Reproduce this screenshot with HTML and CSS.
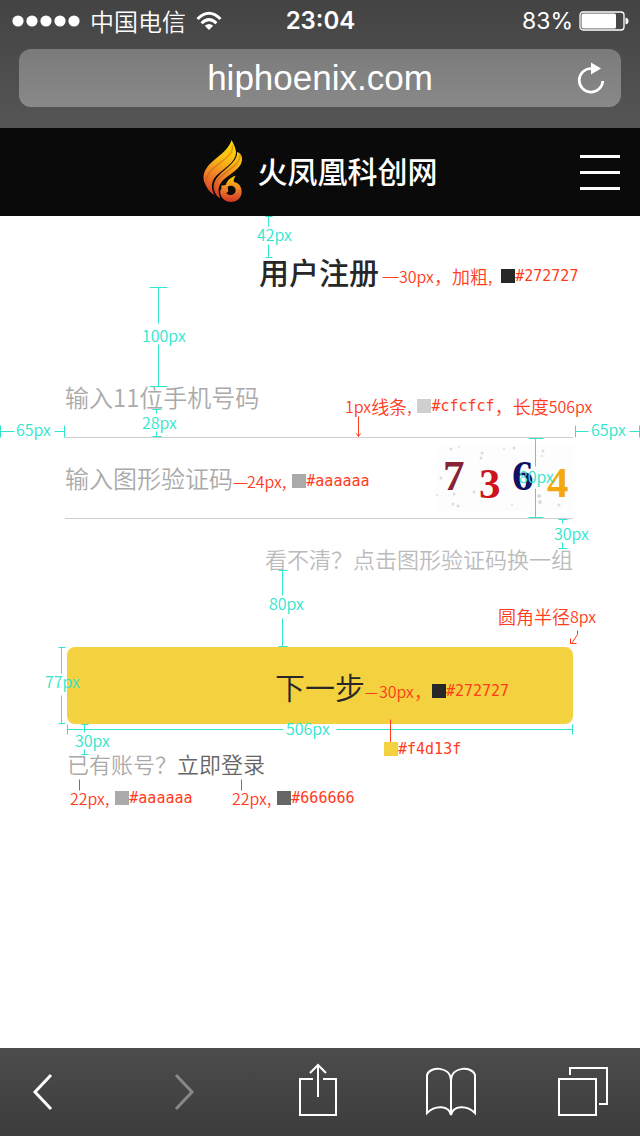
FILE: index.html
```html
<!DOCTYPE html>
<html lang="zh-CN">
<head>
<meta charset="utf-8">
<meta name="viewport" content="width=device-width, initial-scale=1">
<title>用户注册</title>
<link rel="stylesheet" href="styles.css">
</head>
<body>
<div class="page">
  <div class="browser-top">
    <div class="status">
      <div class="status-left">
        <svg class="signal" width="68" height="12" viewBox="0 0 68 12" fill="#fff"><circle cx="6" cy="6" r="5.6"/><circle cx="20" cy="6" r="5.6"/><circle cx="34" cy="6" r="5.6"/><circle cx="48" cy="6" r="5.6"/><circle cx="62" cy="6" r="5.6"/></svg>
        <span class="carrier">中国电信</span>
        <svg class="wifi" width="26" height="20" viewBox="0 0 26 20" fill="none" stroke="#fff" stroke-width="3"><path d="M1.5 8Q13 -3.500 24.500 8"/><path d="M5.600 12.300Q13 5 20.400 12.300"/><path d="M13 19L8.800 14.800Q13 11.300 17.200 14.800Z" fill="#fff" stroke="none"/></svg>
      </div>
      <span class="clock">23:04</span>
      <div class="status-right">
        <span class="percent">83%</span>
        <svg width="50" height="20" viewBox="0 0 50 20"><rect x="1" y="1" width="44" height="18" rx="3" fill="none" stroke="#fff" stroke-width="1.300"/><rect x="2.500" y="2.500" width="34.500" height="15" rx="1.500" fill="#fff"/><path d="M46.500 6.500Q49.500 7 49.500 10T46.500 13.500Z" fill="#fff"/></svg>
      </div>
    </div>
    <div class="address">
      <input class="url" type="text" value="hiphoenix.com" aria-label="网址">
      <button class="reload" type="button" aria-label="刷新"><svg width="28" height="32" viewBox="0 0 28 32"><path d="M14 6.500A11.800 11.800 0 1 0 25.800 19" fill="none" stroke="#fff" stroke-width="2.700"/><path d="M14 0.500V12.500L24 6.500Z" fill="#fff"/></svg></button>
    </div>
  </div>

  <header class="site-head">
    <a class="brand" href="#">
      <svg width="40" height="64" viewBox="36 36 120 192">
        <defs>
          <linearGradient id="flame" x1="120" y1="36" x2="76" y2="210" gradientUnits="userSpaceOnUse"><stop offset="0" stop-color="#ffdc00"/><stop offset=".35" stop-color="#f9bb16"/><stop offset=".65" stop-color="#ef7d28"/><stop offset="1" stop-color="#d63826"/></linearGradient>
          <linearGradient id="curl" x1="120" y1="142" x2="120" y2="222" gradientUnits="userSpaceOnUse"><stop offset="0" stop-color="#ffd400"/><stop offset=".45" stop-color="#f08a26"/><stop offset="1" stop-color="#d33425"/></linearGradient>
        </defs>
        <path fill="url(#flame)" d="M122 36C113 63 91 78 66 99C35 125 33 151 43 169C49 183 59 196 70 200C58 180 61 158 76 143C100 119 142 98 134 66C132 55 127 48 122 36Z"/>
        <path fill="url(#flame)" d="M138 72C141 93 119 111 99 128C73 149 61 169 72 193C75 201 80 207 88 211C76 182 86 164 104 150C127 132 156 116 153 90C152 80 146 74 138 72Z"/>
        <path d="M45 164C44 134 72 116 94 99C116 83 128 70 124 51M72 188C66 157 96 141 117 124C137 108 149 97 147 80" fill="none" stroke="#b84813" stroke-opacity=".35" stroke-width="5"/>
        <path fill="url(#curl)" d="M134 143C119 147 108 158 104 171L90 173L92 180Q86 188 88 198C93 214 105 222 120 222C139 222 152 208 152 191C152 175 142 164 129 162C126 157 130 149 134 143Z"/>
        <path d="M110 176C118 170 133 173 134 186C134 201 116 206 106 196L112 190Z" fill="#0a0a0a"/>
      </svg>
      <span class="brand-name">火凤凰科创网</span>
    </a>
    <button class="menu" type="button" aria-label="菜单"><span></span><span></span><span></span></button>
  </header>

  <main class="content">
    <h1 class="title">用户注册</h1>
    <form class="form">
      <div class="field field-phone"><input type="tel" placeholder="输入11位手机号码" aria-label="手机号码"></div>
      <div class="field field-code">
        <input type="text" placeholder="输入图形验证码" aria-label="图形验证码">
        <svg class="captcha" width="137" height="66" viewBox="0 0 137 66" role="img" aria-label="7364">
          <rect width="137" height="66" fill="#fdfdfd"/>
          <g fill="#dcdcdf"><circle cx="15" cy="4" r="1.500"/><circle cx="23" cy="2" r="1"/><circle cx="46" cy="8" r="1.500"/><circle cx="45" cy="13" r="1.500"/><circle cx="68" cy="4" r="1"/><circle cx="78" cy="3" r="1.500"/><circle cx="107" cy="6" r="1.500"/><circle cx="106" cy="11" r="1"/><circle cx="5" cy="33" r="1.500"/><circle cx="18" cy="49" r="1.500"/><circle cx="17" cy="59" r="1.500"/><circle cx="22" cy="61" r="1.500"/><circle cx="38" cy="47" r="1.500"/><circle cx="103" cy="51" r="2"/><circle cx="104" cy="57" r="2"/><circle cx="123" cy="60" r="1.500"/><circle cx="76" cy="60" r="1"/><circle cx="1" cy="50" r="1"/><circle cx="98" cy="34" r="1"/></g>
          <text x="7" y="45" fill="#872334">7</text><text x="43" y="53" fill="#cd131c">3</text><text x="76" y="45" fill="#101064">6</text><text x="111" y="52" fill="#f3a80d">4</text>
        </svg>
      </div>
      <button class="refresh" type="button">看不清？点击图形验证码换一组</button>
      <div class="actions">
        <button class="submit" type="submit">下一步</button>
        <p class="login">已有账号？<a href="#">立即登录</a></p>
      </div>
    </form>
  </main>

  <nav class="toolbar">
    <button type="button" aria-label="后退"><svg width="22" height="38" viewBox="0 0 22 38"><path d="M19 2L3 19L19 36" fill="none" stroke="#fff" stroke-width="3"/></svg></button>
    <button type="button" aria-label="前进"><svg width="22" height="38" viewBox="0 0 22 38"><path d="M3 2L19 19L3 36" fill="none" stroke="#888" stroke-width="3"/></svg></button>
    <button type="button" aria-label="分享"><svg width="40" height="58" viewBox="0 0 40 58" fill="none" stroke="#fff" stroke-width="2"><path d="M15 16H2V52H38V16H25M20 34V2M12 10L20 2L28 10"/></svg></button>
    <button type="button" aria-label="书签"><svg width="52" height="50" viewBox="0 0 52 50" fill="none" stroke="#fff" stroke-width="2"><path d="M26 48V13C25 -1 5 -1 2 8V46C10 38 24 38 26 48C28 38 42 38 50 46V8C47 -1 27 -1 26 13"/></svg></button>
    <button type="button" aria-label="标签页"><svg width="50" height="50" viewBox="0 0 50 50" fill="none" stroke="#fff" stroke-width="2"><path d="M1 12H38V48H1ZM12 8V1H49V37H41"/></svg></button>
  </nav>

  <div class="specs">
    <svg class="rules" width="640" height="1136" viewBox="0 0 640 1136" fill="none">
      <g stroke="#2fe6cc" transform="translate(.5 .5)">
        <path d="M265 216H272M268 216V226M268 244V257M265 257H272"/>
        <path d="M149 287H167M158 287V323M158 344V386M149 386H167"/>
        <path d="M152 409H161M156 409V413M156 431V436M152 436H161"/>
        <path d="M0 425V437M0 431H14M54 431H64M64 425V437"/>
        <path d="M575 425V437M575 431H588M629 431H639M639 425V437"/>
        <path d="M528 438H543M535 438V466M535 488V517M528 517H543"/>
        <path d="M558 519H567M562 519V523M562 542V548M558 548H567"/>
        <path d="M278 570H287M282 570V595M282 618V646M278 646H287"/>
        <path d="M58 647H65M61 647V673M61 695V723M58 723H65"/>
        <path d="M81 724H88M84 724V732M84 749V754M81 754H88"/>
        <path d="M67 724V734M67 729H283M336 729H572M572 724V734"/>
      </g>
      <g stroke="#ff3c1c" transform="translate(.5 .5)">
        <path d="M382 277H398M233 483H247M365 693H377M390 719V742M79 779V790M241 779V790"/>
        <path d="M358 416V436M356 433L358 436L360 433"/>
        <path d="M577 630V634L571 643M570 638V643H576"/>
      </g>
    </svg>
    <span class="dim d-top">42px</span>
    <span class="dim d-gap">100px</span>
    <span class="dim d-line">28px</span>
    <span class="dim d-left">65px</span>
    <span class="dim d-right">65px</span>
    <span class="dim d-row">80px</span>
    <span class="dim d-hint">30px</span>
    <span class="dim d-button">80px</span>
    <span class="dim d-height">77px</span>
    <span class="dim d-login">30px</span>
    <span class="dim d-width">506px</span>
    <div class="note n-title">30px<b>，加粗</b>,<i class="chip wide dark"></i><code>#272727</code></div>
    <div class="note n-line">1px<b>线条</b>,<i class="chip line"></i><code>#cfcfcf</code><b>，长度</b>506px</div>
    <div class="note n-field">24px,<i class="chip grey"></i><code>#aaaaaa</code></div>
    <div class="note n-radius"><b>圆角半径</b>8px</div>
    <div class="note n-button">30px<b>，</b><i class="chip dark flush"></i><code>#272727</code></div>
    <div class="note n-fill"><i class="chip yellow flush"></i><code>#f4d13f</code></div>
    <div class="note n-ask">22px,<i class="chip grey"></i><code>#aaaaaa</code></div>
    <div class="note n-login">22px,<i class="chip mid"></i><code>#666666</code></div>
  </div>
</div>
</body>
</html>
```

FILE: styles.css
```css
* { box-sizing: border-box; }
body {
  margin: 0;
  background: #fff;
  font-family: "Noto Sans CJK SC", sans-serif;
  font-weight: 350;
}
button, input {
  margin: 0;
  padding: 0;
  border: 0;
  background: none;
  font: inherit;
  color: inherit;
}
svg { display: block; flex: none; }
.page {
  position: relative;
  display: flex;
  flex-direction: column;
  min-height: 100vh;
}

/* browser chrome */
.browser-top {
  height: 128px;
  background: linear-gradient(#434343, #565656);
  color: #fff;
}
.status {
  display: grid;
  grid-template-columns: 1fr auto 1fr;
  align-items: center;
  height: 41px;
  margin-bottom: 8px;
  padding: 0 11px 0 12px;
  font: 400 24px/40px Inter, sans-serif;
}
.status-left, .status-right { display: flex; align-items: center; }
.status-left { gap: 10px; }
.status-right { justify-content: flex-end; gap: 6px; }
.carrier { font: 350 24px/38px "Noto Sans CJK SC", sans-serif; }
.percent { font-size: 23px; }
.clock { font-weight: 600; }
.address {
  display: flex;
  align-items: center;
  height: 58px;
  margin: 0 19px;
  padding-left: 60px;
  border-radius: 12px;
  background: linear-gradient(#7b7b7b, #898989);
}
.url {
  flex: 1;
  min-width: 0;
  height: 58px;
  text-align: center;
  font: 400 35px/58px "Liberation Sans", sans-serif;
}
.reload { display: flex; justify-content: center; width: 60px; }

/* site header */
.site-head {
  display: grid;
  grid-template-columns: 40px 1fr 40px;
  align-items: center;
  height: 88px;
  padding: 0 20px;
  background: #0a0a0a;
}
.brand {
  grid-column: 2;
  display: flex;
  justify-content: center;
  align-items: center;
  gap: 15px;
  color: #fff;
  text-decoration: none;
}
.brand-name { padding-bottom: 4px; font-size: 30px; line-height: 40px; font-weight: 500; }
.menu { display: grid; gap: 13px; }
.menu span { width: 40px; height: 3px; background: #fff; }

/* registration form */
.content { flex: 1; padding: 34px 67px 0 65px; }
.title {
  margin: 0 0 72px;
  text-align: center;
  font-size: 30px;
  line-height: 42px;
  font-weight: 500;
  color: #272727;
}
.field {
  display: flex;
  align-items: center;
  border-bottom: 1px solid #cfcfcf;
  font-size: 24px;
}
.field input { flex: 1; min-width: 0; height: 40px; line-height: 40px; color: #272727; }
.field input::placeholder { color: #aaa; opacity: 1; }
.field-phone { height: 74px; padding-bottom: 8px; }
.field-code { height: 81px; }
.captcha { font: 700 43px "Liberation Serif", serif; }
.refresh {
  display: block;
  margin: 23px 0 73px auto;
  font-size: 22px;
  line-height: 32px;
  color: #bbb;
}
.actions { padding-left: 2px; }
.submit {
  display: block;
  width: 100%;
  height: 77px;
  border-radius: 8px;
  background: #f4d13f;
  font-size: 30px;
  color: #272727;
}
.login { margin: 23px 0 0; font-size: 22px; line-height: 32px; color: #aaa; }
.login a { color: #666; text-decoration: none; }

/* bottom toolbar */
.toolbar {
  display: grid;
  grid-template-columns: 141fr 125fr 127fr 133fr 50px;
  justify-items: start;
  align-items: center;
  height: 88px;
  padding: 0 32px;
  background: linear-gradient(#4c4c4c, #3c3c3c);
}

/* measurement overlay */
.specs {
  position: absolute;
  inset: 0;
  pointer-events: none;
  font-size: 16px;
  line-height: 18px;
  font-weight: 350;
  white-space: nowrap;
}
.rules { position: absolute; left: 0; top: 0; }
.dim, .note { position: absolute; }
.dim { color: #2fe6cc; }
.d-top { left: 257px; top: 225px; }
.d-gap { left: 142px; top: 326px; }
.d-line { left: 142px; top: 413px; }
.d-left { left: 16px; top: 420px; }
.d-right { left: 591px; top: 420px; }
.d-row { left: 519px; top: 467px; }
.d-hint { left: 554px; top: 524px; }
.d-button { left: 269px; top: 594px; }
.d-height { left: 45px; top: 672px; }
.d-login { left: 75px; top: 731px; }
.d-width { left: 286px; top: 719px; }
.note { display: flex; align-items: center; color: #ff3c1c; }
.note b { font-size: 18px; font-weight: 350; }
.note code { font: 400 15px/18px "DejaVu Sans Mono", monospace; }
.chip { width: 14px; height: 14px; margin-left: 6px; }
.wide { margin-left: 9px; }
.flush { margin-left: 0; }
.dark { background: #272727; }
.line { background: #cfcfcf; }
.grey { background: #aaa; }
.mid { background: #666; }
.yellow { background: #f4d13f; }
.n-title { left: 399px; top: 267px; }
.n-line { left: 345px; top: 397px; }
.n-field { left: 247px; top: 472px; }
.n-radius { left: 498px; top: 607px; }
.n-button { left: 379px; top: 682px; }
.n-fill { left: 384px; top: 740px; }
.n-ask { left: 70px; top: 789px; }
.n-login { left: 232px; top: 789px; }
```
